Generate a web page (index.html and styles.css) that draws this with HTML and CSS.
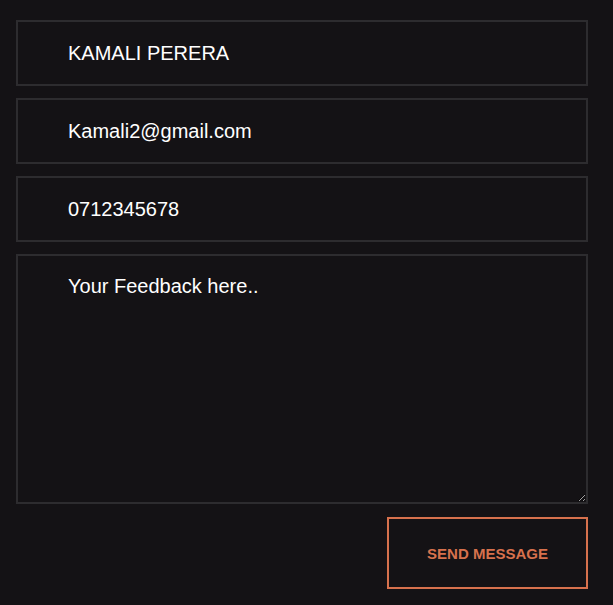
FILE: index.html
```html
<!DOCTYPE html>
<html>
<head>
<meta charset="utf-8">
<link rel="stylesheet" href="styles.css">
</head>
<body>
<form class="form">
  <input class="field" type="text" value="KAMALI PERERA">
  <input class="field" type="email" value="Kamali2@gmail.com">
  <input class="field" type="text" value="0712345678">
  <textarea class="field area" placeholder="Your Feedback here.."></textarea>
  <div class="actions">
    <button class="send" type="button">SEND MESSAGE</button>
  </div>
</form>
</body>
</html>
```
FILE: styles.css
```css
html, body {
  margin: 0;
  background: #141215;
  height: 100%;
}
body {
  padding: 20px 25px 0 16px;
  box-sizing: border-box;
  font-family: "Liberation Sans", Arial, sans-serif;
}
.form {
  display: flex;
  flex-direction: column;
  gap: 12px;
}
.field {
  box-sizing: border-box;
  width: 100%;
  height: 66px;
  margin: 0;
  background: #141215;
  border: 2px solid #2d2c2f;
  border-radius: 0;
  padding: 0 20px 0 50px;
  color: #ffffff;
  font-family: "Liberation Sans", Arial, sans-serif;
  font-size: 20px;
  outline: none;
}
.area {
  height: 250px;
  padding-top: 19px;
  line-height: 23px;
  resize: vertical;
}
.area::placeholder {
  color: #ffffff;
  opacity: 1;
}
.actions {
  display: flex;
  justify-content: flex-end;
  margin-top: 1px;
}
.send {
  box-sizing: border-box;
  width: 201px;
  height: 72px;
  background: transparent;
  border: 2px solid #d7714d;
  color: #d7714d;
  font-family: "Liberation Sans", Arial, sans-serif;
  font-weight: bold;
  font-size: 15px;
  cursor: pointer;
}
```
